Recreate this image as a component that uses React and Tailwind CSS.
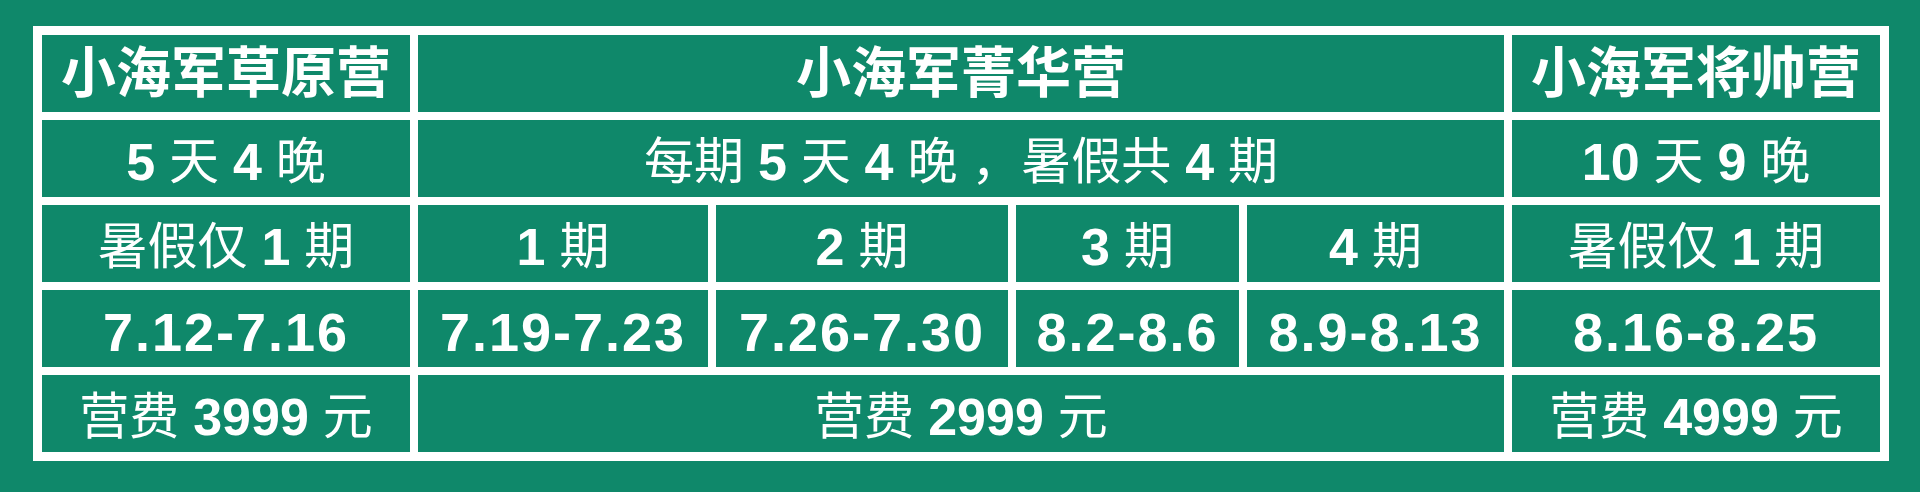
const font = { fontFamily: '"Liberation Sans", "Noto Sans CJK SC", sans-serif' };

const Cell = ({ children, span, title }) => (
  <div
    className={`bg-[#0f886a] text-white flex items-center justify-center whitespace-pre ${
      span ? "col-span-4" : ""
    } ${title ? "text-[55px] font-bold" : "text-[50px] pt-[6px]"}`}
  >
    {children}
  </div>
);

const B = ({ children }) => <span className="font-bold text-[52px]">{children}</span>;

const Date = ({ children }) => (
  <div className="bg-[#0f886a] text-white flex items-center justify-center pt-[6px] text-[54px] font-bold tracking-[2px]">
    {children}
  </div>
);

export default function App() {
  return (
    <div className="min-h-[492px] w-[1920px] bg-[#0f886a] pt-[26px] pl-[33px]" style={font}>
      <div className="grid w-[1856px] grid-cols-[368px_290px_292px_223px_257px_368px] grid-rows-[77px_77px_77px_77px_77px] gap-[8px] bg-white p-[9px] leading-none">
        {/* Row 1 */}
        <Cell title>小海军草原营</Cell>
        <Cell title span>小海军菁华营</Cell>
        <Cell title>小海军将帅营</Cell>

        {/* Row 2 */}
        <Cell>
          <B>5</B> 天 <B>4</B> 晚
        </Cell>
        <Cell span>
          每期 <B>5</B> 天 <B>4</B> 晚 ，暑假共 <B>4</B> 期
        </Cell>
        <Cell>
          <B>10</B> 天 <B>9</B> 晚
        </Cell>

        {/* Row 3 */}
        <Cell>
          暑假仅 <B>1</B> 期
        </Cell>
        <Cell>
          <B>1</B> 期
        </Cell>
        <Cell>
          <B>2</B> 期
        </Cell>
        <Cell>
          <B>3</B> 期
        </Cell>
        <Cell>
          <B>4</B> 期
        </Cell>
        <Cell>
          暑假仅 <B>1</B> 期
        </Cell>

        {/* Row 4 */}
        <Date>7.12-7.16</Date>
        <Date>7.19-7.23</Date>
        <Date>7.26-7.30</Date>
        <Date>8.2-8.6</Date>
        <Date>8.9-8.13</Date>
        <Date>8.16-8.25</Date>

        {/* Row 5 */}
        <Cell>
          营费 <B>3999</B> 元
        </Cell>
        <Cell span>
          营费 <B>2999</B> 元
        </Cell>
        <Cell>
          营费 <B>4999</B> 元
        </Cell>
      </div>
    </div>
  );
}
